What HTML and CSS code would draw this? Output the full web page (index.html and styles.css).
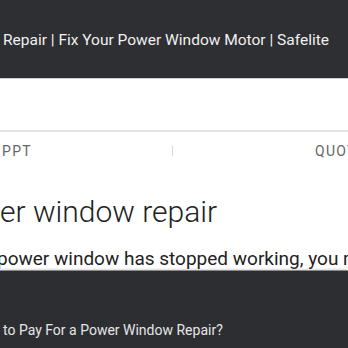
FILE: index.html
```html
<!DOCTYPE html>
<html>
<head>
<meta charset="utf-8">
<link rel="stylesheet" href="styles.css">
</head>
<body>
<header class="topbar">
  <div class="title">Repair | Fix Your Power Window Motor | Safelite</div>
</header>
<main class="page">
  <div class="spacer"></div>
  <nav class="tabs">
    <span class="tab left">PPT</span>
    <span class="sep"></span>
    <span class="tab right">QUOTE</span>
  </nav>
  <h1 class="heading">er window repair</h1>
  <p class="lead">power window has stopped working, you may</p>
</main>
<footer class="bottom">
  <div class="question">to Pay For a Power Window Repair?</div>
</footer>
</body>
</html>
```
FILE: styles.css
```css
html, body {
  margin: 0;
  padding: 0;
  width: 348px;
  height: 348px;
  overflow: hidden;
  background: #fff;
  font-family: Roboto, "Noto Sans", sans-serif;
}
.topbar {
  height: 78px;
  background: #2e2f33;
  border-bottom: 1px solid #c8cdd0;
  display: flex;
  align-items: center;
}
.title {
  color: #f0f0f0;
  font-size: 15.5px;
  padding-left: 3px;
  padding-top: 2px;
  white-space: nowrap;
}
.page {
  display: flex;
  flex-direction: column;
}
.spacer {
  height: 51px;
  border-bottom: 2px solid #e3e3e3;
}
.tabs {
  display: flex;
  align-items: center;
  height: 38px;
  white-space: nowrap;
}
.tab {
  flex-shrink: 0;
  color: #666;
  font-size: 14px;
  letter-spacing: 1.3px;
}
.tab.left {
  padding-left: 2px;
  width: 170px;
}
.sep {
  flex-shrink: 0;
  width: 1px;
  height: 10px;
  background: #d8d8d8;
  margin-right: 142px;
}
.heading {
  margin: 0;
  font-weight: 300;
  font-size: 30px;
  line-height: 36px;
  color: #222;
  margin-top: 24px;
  white-space: nowrap;
}
.lead {
  margin: 0;
  margin-top: 17px;
  margin-left: -3px;
  font-size: 19px;
  line-height: 24px;
  color: #222;
  white-space: nowrap;
  height: 23px;
}
.bottom {
  background: #2d2e32;
  border-top: 1px solid #8a8a8a;
  box-shadow: 0 -1px 2px rgba(0,0,0,0.15);
  height: 80px;
}
.question {
  color: #e6e6e6;
  font-size: 14px;
  padding-left: 3px;
  padding-top: 51px;
  white-space: nowrap;
}
```
